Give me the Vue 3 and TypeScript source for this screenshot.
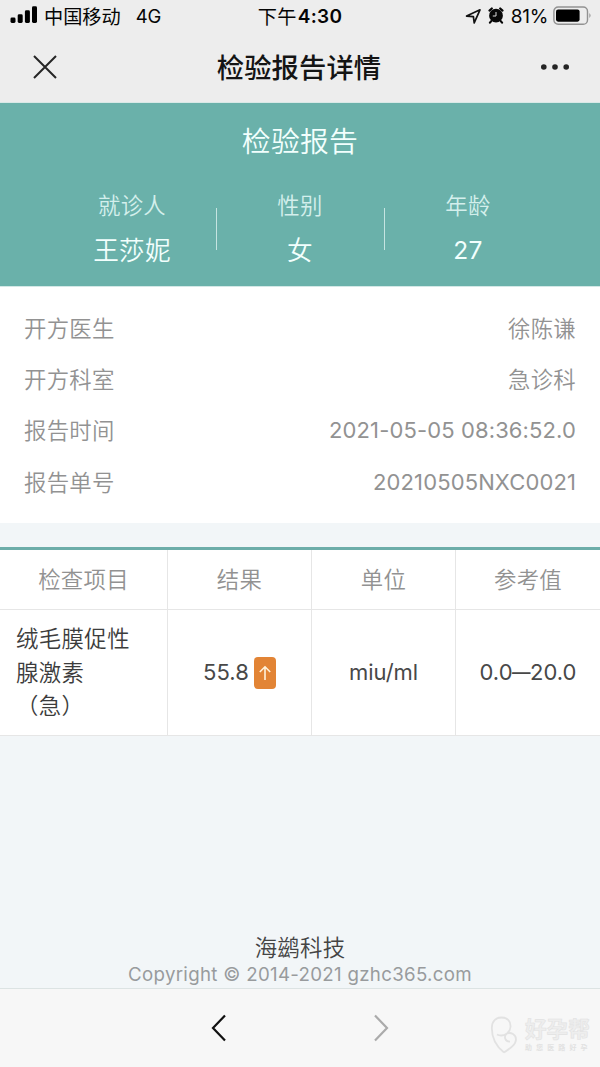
<script setup lang="ts">
interface Patient { label: string; value: string }
interface InfoRow { label: string; value: string; kind: string }

const patient: Patient[] = [
  { label: '就诊人', value: '王莎妮' },
  { label: '性别', value: '女' },
  { label: '年龄', value: '27' },
]
const info: InfoRow[] = [
  { label: '开方医生', value: '徐陈谦', kind: 'cjk' },
  { label: '开方科室', value: '急诊科', kind: 'cjk' },
  { label: '报告时间', value: '2021-05-05 08:36:52.0', kind: 'time' },
  { label: '报告单号', value: '20210505NXC0021', kind: 'code' },
]
const headers: string[] = ['检查项目', '结果', '单位', '参考值']
const itemLines: string[] = ['绒毛膜促性', '腺激素', '（急）']
</script>

<template>
  <div class="screen">
    <header class="top">
      <div class="status">
        <div class="side">
          <svg class="signal" width="28" height="18" viewBox="0 0 28 18">
            <rect x="0.5" y="11.5" width="5" height="5.5" rx="1.4" />
            <rect x="7.7" y="8.3" width="5" height="8.7" rx="1.4" />
            <rect x="14.9" y="4.3" width="5" height="12.7" rx="1.4" />
            <rect x="22" y="0.3" width="5" height="16.7" rx="1.4" />
          </svg>
          <span class="carrier">中国移动</span>
          <span class="network">4G</span>
        </div>
        <div class="clock"><span>下午</span><b>4:30</b></div>
        <div class="side right">
          <svg class="locate" width="17" height="17" viewBox="0 0 17 17">
            <path d="M1.6 8.1 15 1.8 9.2 14.9 8.4 8.7Z" fill="none" stroke="#111" stroke-width="1.7" stroke-linejoin="round" />
          </svg>
          <svg class="alarm" width="16" height="17" viewBox="0 0 16 17">
            <circle cx="8" cy="8.7" r="6.9" fill="#080808" />
            <path d="M1.5 3.6 3.8 1.5M14.5 3.6 12.2 1.5M3.2 14.1 2 15.6M12.8 14.1 14 15.6" stroke="#080808" stroke-width="2.2" stroke-linecap="round" />
            <path d="M8 5V9H4.8" fill="none" stroke="#dcdcdc" stroke-width="1" />
          </svg>
          <span class="percent">81%</span>
          <svg class="battery" width="39" height="20" viewBox="0 0 39 20">
            <rect x="0.9" y="1" width="33.6" height="17.2" rx="4.3" fill="none" stroke="#929292" stroke-width="1.4" />
            <rect x="3" y="3.4" width="23.6" height="12.3" rx="2.1" fill="#000" />
            <path d="M36.4 7.1q2.3 2.5 0 5Z" fill="#929292" />
          </svg>
        </div>
      </div>
      <div class="nav">
        <svg class="close" width="24" height="24" viewBox="0 0 24 24">
          <path d="M1 1 23 23M23 1 1 23" stroke="#252525" stroke-width="2" fill="none" />
        </svg>
        <h1>检验报告详情</h1>
        <svg class="more" width="30" height="8" viewBox="0 0 30 8">
          <circle cx="3.8" cy="4" r="2.8" /><circle cx="15" cy="4" r="2.8" /><circle cx="26.2" cy="4" r="2.8" />
        </svg>
      </div>
    </header>

    <section class="banner">
      <h2>检验报告</h2>
      <div class="people">
        <div v-for="p in patient" :key="p.label" class="person">
          <span class="plabel">{{ p.label }}</span>
          <span class="pvalue">{{ p.value }}</span>
        </div>
      </div>
    </section>

    <section class="info">
      <div v-for="r in info" :key="r.label" class="row">
        <span>{{ r.label }}</span>
        <span :class="r.kind">{{ r.value }}</span>
      </div>
    </section>

    <section class="table">
      <div v-for="h in headers" :key="h" class="cell head">{{ h }}</div>
      <div class="cell name">
        <div v-for="l in itemLines" :key="l">{{ l }}</div>
      </div>
      <div class="cell result">
        <span>55.8</span>
        <span class="badge">
          <svg width="14" height="16" viewBox="0 0 14 16">
            <path d="M7 15V1.8M1.8 7 7 1.8 12.2 7" fill="none" stroke="#fff3dc" stroke-width="1.6" />
          </svg>
        </span>
      </div>
      <div class="cell unit">miu/ml</div>
      <div class="cell range">0.0<i>—</i>20.0</div>
    </section>

    <div class="credit">
      <div class="company">海鹚科技</div>
      <div class="copy">Copyright © 2014-2021 gzhc365.com</div>
    </div>

    <footer class="toolbar">
      <svg width="16" height="28" viewBox="0 0 16 28">
        <path d="M14 1.5 2 14 14 26.5" fill="none" stroke="#111" stroke-width="2.2" />
      </svg>
      <svg width="16" height="28" viewBox="0 0 16 28">
        <path d="M2 1.5 14 14 2 26.5" fill="none" stroke="#ababab" stroke-width="2.2" />
      </svg>
      <div class="mark">
        <svg width="28" height="40" viewBox="0 0 28 40">
          <path d="M14 36.5C7 31 1.8 22 1.8 12 1.8 5 6 1.5 11.5 1.5c6 0 9.5 4 9 9.5-.3 3-1.5 5-3.5 6.5M7 18.5c4 2 7 1 10-1 4-1.5 9 1 9 6 0 5-6 9-12 13M17 17.5c-4 3-1.5 8.5 3 8" fill="none" stroke="#e2e2e2" stroke-width="1.8" />
        </svg>
        <div>
          <div class="brand">好孕帮</div>
          <div class="slogan">助您医路好孕</div>
        </div>
      </div>
    </footer>
  </div>
</template>

<style>
body { margin: 0; }
</style>

<style scoped>
.screen {
  width: 600px;
  height: 1067px;
  display: flex;
  flex-direction: column;
  overflow: hidden;
  background: #f2f6f8;
  font-family: Inter, "Noto Sans CJK SC", sans-serif;
  font-weight: 350;
  font-size: 22.4px;
  letter-spacing: 0.25px;
  color: #484848;
  text-spacing-trim: space-all;
}
.top { height: 103px; flex: none; background: #ededed; border-bottom: 1px solid #d9e9e7; box-sizing: border-box; color: #050505; }
.status { height: 32px; display: grid; grid-template-columns: 1fr auto 1fr; align-items: center; font-size: 19.2px; font-weight: 400; }
.side { display: flex; align-items: center; height: 32px; }
.signal { margin: -2px 6px 0 10px; }
.carrier { letter-spacing: 0; }
.network { margin-left: 15px; font-size: 18.5px; letter-spacing: -0.2px; }
.clock { display: flex; align-items: center; letter-spacing: 0.3px; }
.clock b { font-weight: 600; font-size: 19px; letter-spacing: 0.3px; margin-left: 1px; }
.right { justify-content: flex-end; }
.alarm { margin: -1px 7px 0 6px; }
.percent { font-size: 19px; letter-spacing: -0.3px; margin-right: 5px; }
.battery { margin: -1px 8px 0 0; }
.nav { height: 69px; display: grid; grid-template-columns: 1fr auto 1fr; align-items: center; }
.close { margin-left: 33px; }
.nav h1 { margin: 0; padding-top: 5px; height: 40px; font-size: 27.3px; font-weight: 500; letter-spacing: 0.1px; line-height: 40px; transform: translateX(-1px); color: #141414; }
.more { justify-self: end; margin-right: 30px; fill: #252525; }

.banner { height: 184px; flex: none; background: #6ab1aa; border-bottom: 1px solid #d3e8e6; box-sizing: border-box; color: #f2fffd; }
.banner h2 { margin: 0; padding-top: 19px; height: 40px; line-height: 40px; text-align: center; font-size: 28.8px; font-weight: 350; letter-spacing: 0.3px; }
.people { margin: 24px 48px 0; display: grid; grid-template-columns: repeat(3, 1fr); }
.person { display: flex; flex-direction: column; align-items: center; position: relative; }
.person + .person::before { content: ""; position: absolute; left: 0; top: 22px; width: 1px; height: 42px; background: #c5e4e1; }
.plabel { line-height: 40px; color: #d4efec; }
.pvalue { font-size: 25.6px; line-height: 40px; margin-top: 5px; }
.person:last-child .pvalue { font-weight: 400; font-size: 24.5px; margin-top: 4px; }

.info { flex: none; box-sizing: border-box; height: 236px; padding: 14.5px 24px; background: #fff; color: #929292; }
.row { height: 51.2px; display: flex; justify-content: space-between; align-items: center; }
.time { letter-spacing: 0.12px; }
.code { letter-spacing: 0.12px; }
.time, .code { font-weight: 400; font-size: 22px; padding-top: 2px; }

.table { flex: none; margin-top: 24px; display: grid; grid-template-columns: 168px 144px 144px 144px; grid-template-rows: 60px 126px; border-top: 3px solid #6dada9; background: #fff; }
.cell { box-sizing: border-box; display: flex; align-items: center; justify-content: center; border-right: 1px solid #e6e6e6; border-bottom: 1px solid #e6e6e6; font-weight: 400; }
.cell:nth-child(4n) { border-right: 0; }
.head { color: #929292; font-weight: 350; padding-bottom: 3px; }
.name { flex-direction: column; align-items: flex-start; padding-left: 16px; line-height: 33.6px; font-weight: 350; color: #3c3c3c; letter-spacing: 0.4px; }
.result { gap: 5px; font-size: 22px; letter-spacing: 0.1px; }
.result > span:first-child { padding-bottom: 2px; }
.badge { width: 22px; height: 32px; margin-top: 1px; border-radius: 4px; background: #e28435; display: flex; align-items: center; justify-content: center; }
.unit { font-size: 22px; letter-spacing: -0.1px; padding-bottom: 2px; }
.range { font-size: 22px; letter-spacing: 0; padding-bottom: 2px; }
.range i { font-style: normal; margin: 0 -0.5px; transform: scaleX(0.84); width: 18.5px; display: flex; justify-content: center; }

.credit { margin-top: auto; text-align: center; }
.company { line-height: 32px; color: #444; }
.copy { height: 24px; line-height: 21px; font-size: 18.7px; font-weight: 400; letter-spacing: 0.3px; color: #989b9d; }
.toolbar { flex: none; position: relative; box-sizing: border-box; height: 79px; border-top: 1px solid #dce3e3; background: #f7f7f7; display: flex; justify-content: center; align-items: center; gap: 146px; }
.mark { position: absolute; left: 490px; top: 27px; display: flex; gap: 7px; color: #eeeeee; }
.brand { font-size: 21.6px; font-weight: 700; line-height: 27px; letter-spacing: 0; -webkit-text-stroke: 0.6px #e2e2e2; }
.slogan { font-size: 7px; line-height: 9px; letter-spacing: 4.1px; white-space: nowrap; font-weight: 700; color: #e2e2e2; }
</style>
